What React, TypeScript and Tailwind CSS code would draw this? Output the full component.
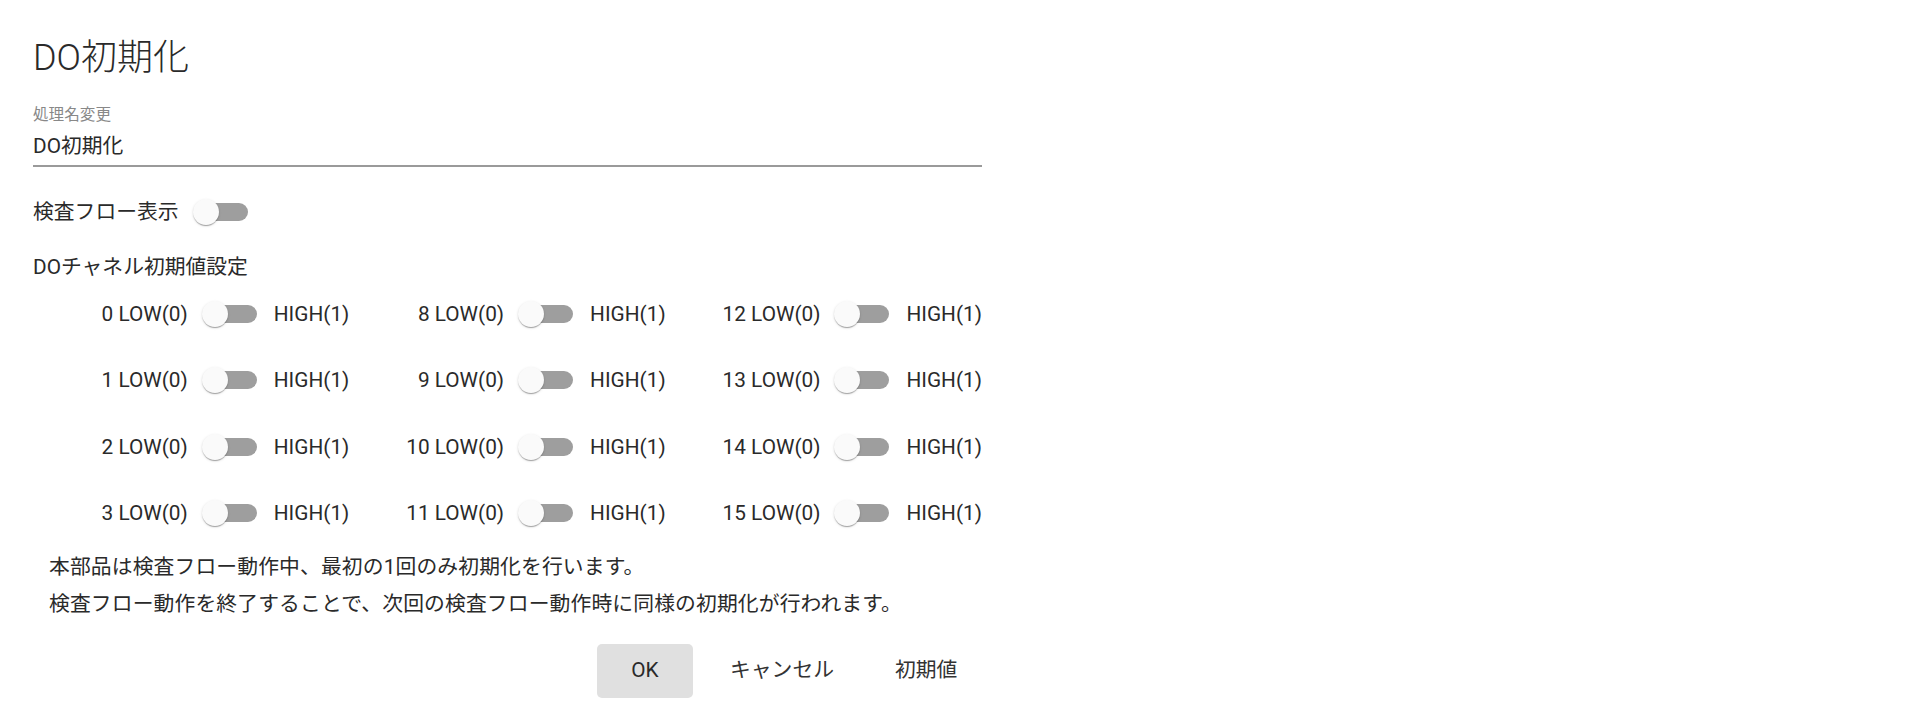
import React from "react";

const FONT = "font-['Roboto','Noto_Sans_CJK_JP',sans-serif]";

const Toggle = () => {
  return (
    <div className="relative w-[55px] h-[26px] shrink-0">
      <div className="absolute left-[11px] top-[4px] w-[44px] h-[18px] rounded-full bg-[#9e9e9e]" />
      <div className="absolute left-0 top-0 w-[26px] h-[26px] rounded-full bg-[#fafafa] shadow-[0_2px_1px_-1px_rgba(0,0,0,0.2),0_1px_1px_0_rgba(0,0,0,0.14),0_1px_3px_0_rgba(0,0,0,0.12)]" />
    </div>
  );
};

const channels = [0, 8, 12, 1, 9, 13, 2, 10, 14, 3, 11, 15];

const ChannelCell = ({ ch }: { ch: number }) => {
  return (
    <div className="flex items-center justify-end h-[66.3px]">
      <span className="text-[20.8px] leading-[28px]">{ch} LOW(0)</span>
      <div className="ml-[14px] mr-[17px]">
        <Toggle />
      </div>
      <span className="text-[20.8px] leading-[28px]">HIGH(1)</span>
    </div>
  );
};

export default function App() {
  return (
    <div className={`w-[1920px] h-[719px] bg-white overflow-hidden text-[#2a2a2a] ${FONT}`}>
      <div className="w-[1009px] ml-[3px] px-[30px] pt-[34px]">
        <h2 className="text-[36px] leading-[48px] font-light">DO初期化</h2>

        {/* 処理名 */}
        <div className="mt-[23px]">
          <div className="text-[15.6px] leading-[20px] text-[#888]">処理名変更</div>
          <div className="mt-[7px] pb-[5px] border-b-2 border-[#9a9a9a]">
            <div className="text-[20.8px] leading-[28px]">DO初期化</div>
          </div>
        </div>

        <div className="mt-[20px] h-[50px] flex items-center">
          <span className="text-[20.8px] leading-[28px]">検査フロー表示</span>
          <div className="ml-[14px]">
            <Toggle />
          </div>
        </div>

        <div className="mt-[16px] text-[20.8px] leading-[28px]">DOチャネル初期値設定</div>

        <div className="grid grid-cols-3">
          {channels.map((ch) => (
            <ChannelCell key={ch} ch={ch} />
          ))}
        </div>

        <div className="mt-[3px] pl-[16px] text-[20.8px] leading-[37px] tracking-[0.12px]">
          <p>本部品は検査フロー動作中、最初の1回のみ初期化を行います。</p>
          <p>検査フロー動作を終了することで、次回の検査フロー動作時に同様の初期化が行われます。</p>
        </div>

        <div className="mt-[20.5px] flex items-center">
          <button className="ml-[564px] w-[96px] h-[54px] rounded-[5px] bg-[#e0e0e0] text-[20.8px]">OK</button>
          <button className="ml-[17px] h-[54px] px-[20px] rounded-[5px] text-[20.8px] text-[#333]">キャンセル</button>
          <button className="ml-[21px] h-[54px] px-[20px] rounded-[5px] text-[20.8px] text-[#333]">初期値</button>
        </div>
      </div>
    </div>
  );
}
